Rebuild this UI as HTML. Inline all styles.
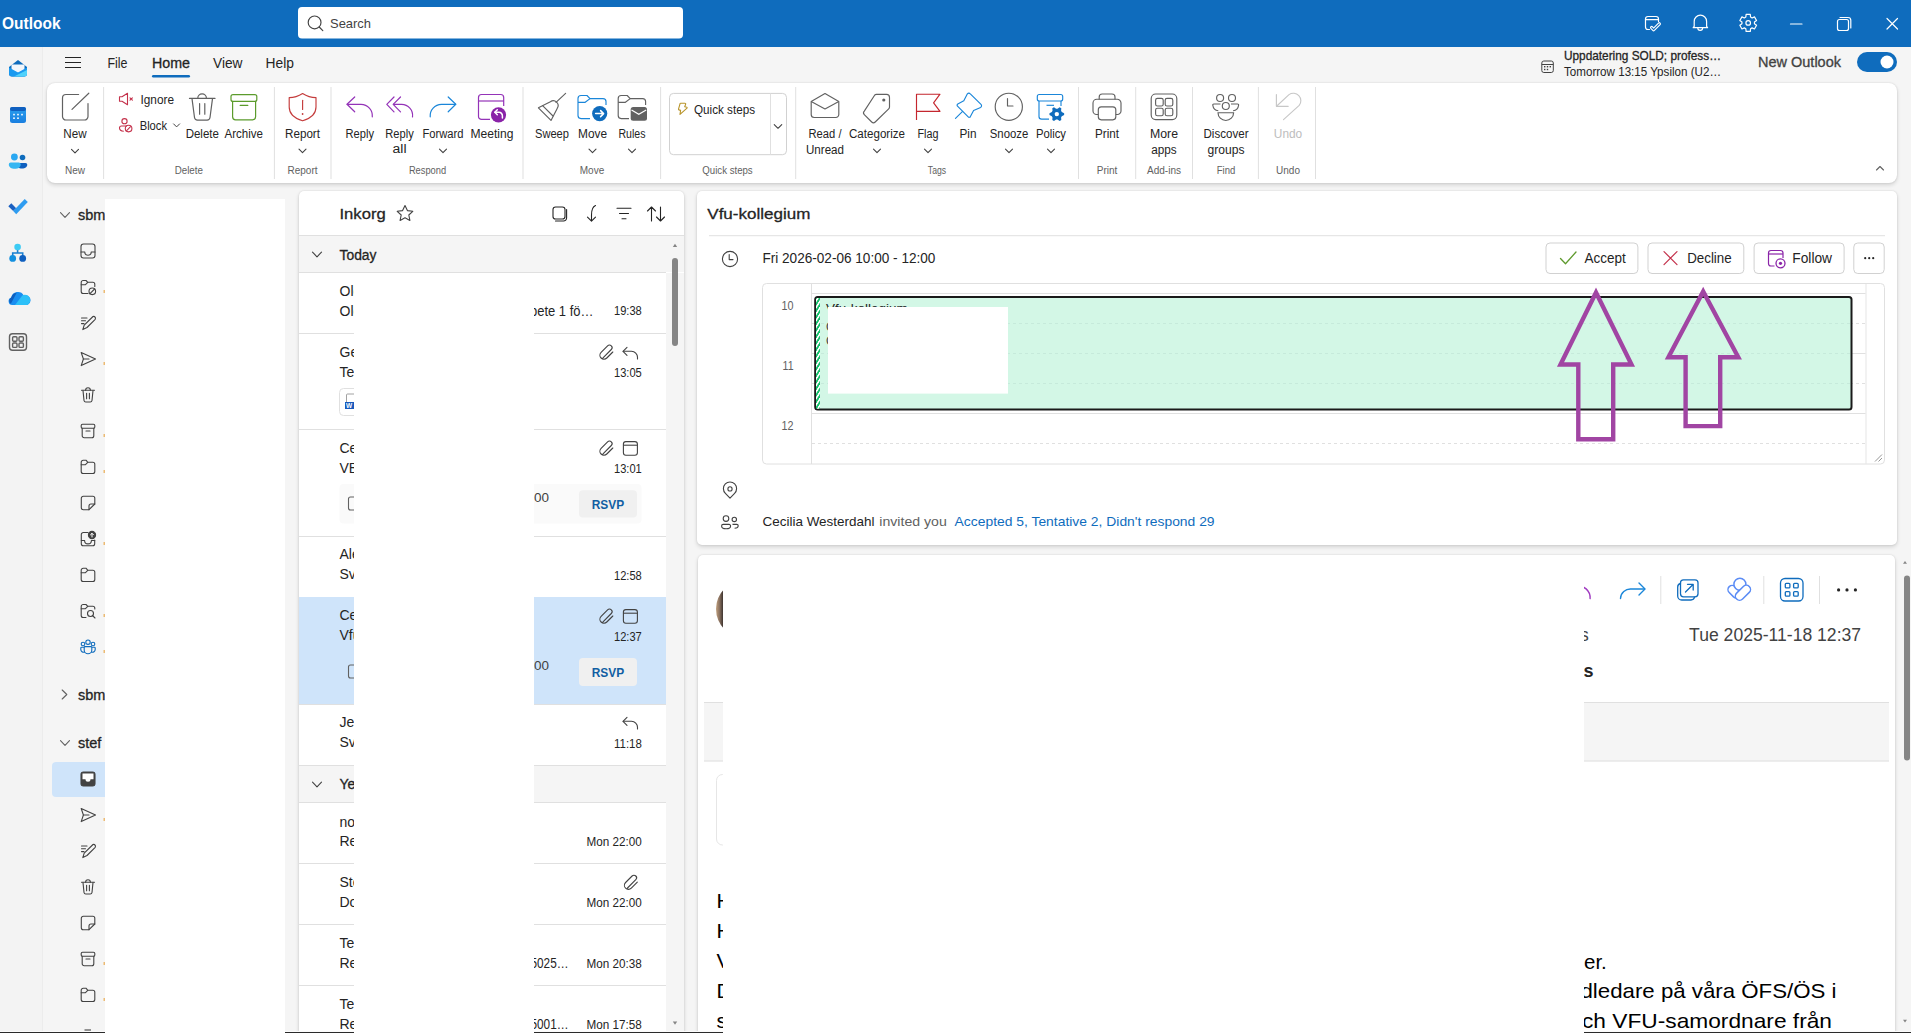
<!DOCTYPE html>
<html><head><meta charset="utf-8">
<style>
*{box-sizing:border-box;margin:0;padding:0}
html,body{width:1911px;height:1033px;overflow:hidden;background:#f5f5f5;font-family:"Liberation Sans",sans-serif;color:#242424}
.a{position:absolute}
#title{left:0;top:0;width:1911px;height:47px;background:#0f6cbd}
#rail{left:0;top:47px;width:43px;height:986px;background:#f3f3f3;border-right:1px solid #ececec}
#ribbon{left:47px;top:83px;width:1850px;height:100px;background:#fff;border-radius:8px;box-shadow:0 0 2px rgba(0,0,0,.12),0 2px 4px rgba(0,0,0,.14)}
#list{left:299px;top:191px;width:385px;height:850px;background:#fff;border-radius:5px 5px 0 0;box-shadow:0 0 2px rgba(0,0,0,.12),0 2px 4px rgba(0,0,0,.14)}
#rp1{left:697px;top:191px;width:1200px;height:354px;background:#fff;border-radius:5px;box-shadow:0 0 2px rgba(0,0,0,.12),0 2px 4px rgba(0,0,0,.14)}
#rp2{left:698px;top:555px;width:1197px;height:500px;background:#fff;border-radius:5px 5px 0 0;box-shadow:0 0 2px rgba(0,0,0,.12),0 2px 4px rgba(0,0,0,.14)}
#ov{position:absolute;left:0;top:0;width:1911px;height:1033px;overflow:hidden}
#ov text{font-family:"Liberation Sans",sans-serif}
</style></head><body>
<div id="title" class="a"></div>
<div id="rail" class="a"></div>
<div id="ribbon" class="a"></div>
<div id="list" class="a"></div>
<div id="rp1" class="a"></div>
<div id="rp2" class="a"></div>
<svg id="ov" width="1911" height="1033" viewBox="0 0 1911 1033">
<text x="2" y="29.3" font-size="16" font-weight="bold" fill="#fff" textLength="58.5" lengthAdjust="spacingAndGlyphs">Outlook</text>
<rect x="298" y="7" width="385" height="31.4" rx="4" fill="#fff"/>
<g fill="none" stroke="#424242" stroke-width="1.15"><circle cx="314.6" cy="22.4" r="6.4"/><path d="M319.2 27 L322.8 30.6" stroke-linecap="round"/></g>
<text x="330" y="28" font-size="13.5" fill="#424242" textLength="41" lengthAdjust="spacingAndGlyphs">Search</text>
<g fill="none" stroke="#fff" stroke-width="1.2" stroke-linecap="round" stroke-linejoin="round">
<path d="M1649.5 29.5 H1648 a2.5 2.5 0 0 1 -2.5 -2.5 V19 a2.5 2.5 0 0 1 2.5 -2.5 H1656 a2.5 2.5 0 0 1 2.5 2.5 V21.5"/><path d="M1645.5 19.6 H1658.5"/><path d="M1651.7 27.6 L1653.6 29.6 L1659.3 23.9" stroke-width="3.4"/><path d="M1651.7 27.6 L1653.6 29.6 L1659.3 23.9" stroke="#0f6cbd" stroke-width="1.1"/>
<path d="M1694.2 26.3 V21.4 a6.2 6.2 0 0 1 12.4 0 V26.3 l1 1.4 H1693.2 z"/><path d="M1697.8 27.9 a2.4 2.4 0 0 0 4.8 0"/>
<path d="M1745.84 17.06 L1746.10 14.46 L1750.30 14.46 L1750.56 17.06 L1752.08 17.94 L1754.46 16.86 L1756.56 20.50 L1754.44 22.02 L1754.44 23.78 L1756.56 25.30 L1754.46 28.94 L1752.08 27.86 L1750.56 28.74 L1750.30 31.34 L1746.10 31.34 L1745.84 28.74 L1744.32 27.86 L1741.94 28.94 L1739.84 25.30 L1741.96 23.78 L1741.96 22.02 L1739.84 20.50 L1741.94 16.86 L1744.32 17.94 z"/><circle cx="1748.2" cy="22.9" r="2.3"/>
<path d="M1790.5 24 H1802"/>
<rect x="1837.5" y="19.5" width="11" height="11" rx="2"/><path d="M1840 17.5 H1848 a2.8 2.8 0 0 1 2.8 2.8 V28"/>
<path d="M1887 18.5 L1897.5 29 M1897.5 18.5 L1887 29"/>
</g>
<g stroke="#242424" stroke-width="1.2"><path d="M65 57.5 H81 M65 62.5 H81 M65 67.5 H81"/></g>
<text x="107.5" y="68" font-size="14" fill="#242424" textLength="20" lengthAdjust="spacingAndGlyphs">File</text>
<text x="152" y="68" font-size="14" fill="#242424" textLength="38" lengthAdjust="spacingAndGlyphs" stroke="#242424" stroke-width="0.3">Home</text>
<rect x="152" y="75" width="38" height="2.5" rx="1.2" fill="#0f6cbd"/>
<text x="213" y="68" font-size="14" fill="#242424" textLength="29.5" lengthAdjust="spacingAndGlyphs">View</text>
<text x="265.6" y="68" font-size="14" fill="#242424" textLength="28.4" lengthAdjust="spacingAndGlyphs">Help</text>
<g fill="none" stroke="#424242" stroke-width="1"><rect x="1541.8" y="61" width="11.5" height="11.5" rx="2"/><path d="M1541.8 64.5 H1553.3"/></g><g fill="#424242"><rect x="1544" y="66" width="1.4" height="1.4"/><rect x="1546.8" y="66" width="1.4" height="1.4"/><rect x="1549.6" y="66" width="1.4" height="1.4"/><rect x="1544" y="68.8" width="1.4" height="1.4"/><rect x="1546.8" y="68.8" width="1.4" height="1.4"/></g>
<text x="1564" y="60" font-size="13" fill="#242424" textLength="157" lengthAdjust="spacingAndGlyphs" stroke="#242424" stroke-width="0.3">Uppdatering SOLD; profess…</text>
<text x="1564" y="76" font-size="13" fill="#242424" textLength="157" lengthAdjust="spacingAndGlyphs">Tomorrow 13:15 Ypsilon (U2…</text>
<text x="1758" y="67" font-size="14" fill="#424242" textLength="83" lengthAdjust="spacingAndGlyphs" stroke="#424242" stroke-width="0.3">New Outlook</text>
<rect x="1857" y="52" width="40" height="20" rx="10" fill="#0f6cbd"/><circle cx="1887" cy="62" r="6.5" fill="#fff"/>
<rect x="103.1" y="87" width="1" height="92" fill="#e0e0e0"/>
<rect x="273.9" y="87" width="1" height="92" fill="#e0e0e0"/>
<rect x="330.5" y="87" width="1" height="92" fill="#e0e0e0"/>
<rect x="522.5" y="87" width="1" height="92" fill="#e0e0e0"/>
<rect x="660.1" y="87" width="1" height="92" fill="#e0e0e0"/>
<rect x="795.2" y="87" width="1" height="92" fill="#e0e0e0"/>
<rect x="1078.0" y="87" width="1" height="92" fill="#e0e0e0"/>
<rect x="1135.2" y="87" width="1" height="92" fill="#e0e0e0"/>
<rect x="1192.0" y="87" width="1" height="92" fill="#e0e0e0"/>
<rect x="1257.9" y="87" width="1" height="92" fill="#e0e0e0"/>
<rect x="1315.0" y="87" width="1" height="92" fill="#e0e0e0"/>
<text x="75" y="174" font-size="10" fill="#616161" text-anchor="middle">New</text>
<text x="188.8" y="174" font-size="10" fill="#616161" text-anchor="middle" textLength="28.2" lengthAdjust="spacingAndGlyphs">Delete</text>
<text x="302.5" y="174" font-size="10" fill="#616161" text-anchor="middle">Report</text>
<text x="427.5" y="174" font-size="10" fill="#616161" text-anchor="middle" textLength="37.2" lengthAdjust="spacingAndGlyphs">Respond</text>
<text x="592" y="174" font-size="10" fill="#616161" text-anchor="middle">Move</text>
<text x="727.5" y="174" font-size="10" fill="#616161" text-anchor="middle" textLength="50.4" lengthAdjust="spacingAndGlyphs">Quick steps</text>
<text x="937" y="174" font-size="10" fill="#616161" text-anchor="middle" textLength="18.3" lengthAdjust="spacingAndGlyphs">Tags</text>
<text x="1107" y="174" font-size="10" fill="#616161" text-anchor="middle">Print</text>
<text x="1164" y="174" font-size="10" fill="#616161" text-anchor="middle" textLength="34" lengthAdjust="spacingAndGlyphs">Add-ins</text>
<text x="1226" y="174" font-size="10" fill="#616161" text-anchor="middle" textLength="18.5" lengthAdjust="spacingAndGlyphs">Find</text>
<text x="1288" y="174" font-size="10" fill="#616161" text-anchor="middle">Undo</text>
<g fill="none" stroke="#616161" stroke-width="1.2" stroke-linecap="round" stroke-linejoin="round">
<path d="M78.6 94.5 H66 a3.5 3.5 0 0 0 -3.5 3.5 V116.5 a3.5 3.5 0 0 0 3.5 3.5 H84.5 a3.5 3.5 0 0 0 3.5 -3.5 V103.5"/><path d="M72 109.4 L88.8 93.2"/>
</g>
<text x="75" y="137.7" font-size="12" fill="#242424" text-anchor="middle" textLength="23.3" lengthAdjust="spacingAndGlyphs">New</text>
<path d="M71.5 149.45 L75 152.95 L78.5 149.45" fill="none" stroke="#424242" stroke-width="1.1" stroke-linecap="round" stroke-linejoin="round"/>
<g fill="none" stroke="#c4314b" stroke-width="1.1" stroke-linejoin="round" stroke-linecap="round"><path d="M119.5 96.8 H122 L127.5 93.3 V104.7 L122 101.2 H119.5 z"/><path d="M130 97.8 L132.4 100.2 M132.4 97.8 L130 100.2"/></g>
<text x="140.5" y="104" font-size="12" fill="#242424" text-anchor="start" textLength="33.5" lengthAdjust="spacingAndGlyphs">Ignore</text>
<g fill="none" stroke="#c4314b" stroke-width="1.1"><circle cx="124.5" cy="121.2" r="2.6"/><path d="M127 126 H121.5 a2 2 0 0 0 -2 2 c0 1.8 1.6 3 4.3 3.2"/><circle cx="128.6" cy="128.6" r="3.3"/><path d="M126.4 130.8 L130.8 126.4"/></g>
<text x="139.7" y="129.5" font-size="12" fill="#242424" text-anchor="start" textLength="27.3" lengthAdjust="spacingAndGlyphs">Block</text>
<path d="M173.6 123.9 L176.6 126.9 L179.6 123.9" fill="none" stroke="#424242" stroke-width="1" stroke-linecap="round" stroke-linejoin="round"/>
<g fill="none" stroke="#616161" stroke-width="1.2" stroke-linecap="round" stroke-linejoin="round"><path d="M189.5 98.4 H215"/><path d="M197.8 98.2 a4.3 4.3 0 0 1 8.6 0"/><path d="M192 98.6 L194.5 117.5 a3 3 0 0 0 3 2.6 H207 a3 3 0 0 0 3 -2.6 L212.5 98.6"/><path d="M199.6 103.6 V114.2 M204.8 103.6 V114.2"/></g>
<text x="202.3" y="137.7" font-size="12" fill="#242424" text-anchor="middle" textLength="33.3" lengthAdjust="spacingAndGlyphs">Delete</text>
<g fill="none" stroke="#5b9b2c" stroke-width="1.2" stroke-linecap="round" stroke-linejoin="round"><rect x="231" y="94.6" width="25.8" height="6.8" rx="2"/><path d="M232.6 101.4 V116.8 a3 3 0 0 0 3 3 H252.6 a3 3 0 0 0 3 -3 V101.4"/><path d="M240.2 105.4 H247.8"/></g>
<text x="243.7" y="137.7" font-size="12" fill="#242424" text-anchor="middle" textLength="38.5" lengthAdjust="spacingAndGlyphs">Archive</text>
<g fill="none" stroke="#c43c3c" stroke-width="1.15" stroke-linejoin="round" stroke-linecap="round"><path d="M302.6 93.5 C298 96.5 294 97.6 289.2 97.6 V107 C289.2 113.5 294 118.2 302.6 120.8 C311.2 118.2 316 113.5 316 107 V97.6 C311.2 97.6 307.2 96.5 302.6 93.5 z"/><path d="M302.6 100.2 V109.4"/></g><circle cx="302.6" cy="114" r="0.9" fill="#c43c3c"/>
<text x="302.5" y="137.7" font-size="12" fill="#242424" text-anchor="middle" textLength="35" lengthAdjust="spacingAndGlyphs">Report</text>
<path d="M299.0 149.15 L302.5 152.65 L306.0 149.15" fill="none" stroke="#424242" stroke-width="1.1" stroke-linecap="round" stroke-linejoin="round"/>
<g fill="none" stroke="#9433b8" stroke-width="1.2" stroke-linecap="round" stroke-linejoin="round"><path d="M354.7 97 L347 104.3 L354.7 111.8"/><path d="M347.2 104.3 H361 a11.5 11.5 0 0 1 11.3 12.5"/></g>
<text x="359.8" y="137.7" font-size="12" fill="#242424" text-anchor="middle" textLength="28.4" lengthAdjust="spacingAndGlyphs">Reply</text>
<g fill="none" stroke="#9433b8" stroke-width="1.2" stroke-linecap="round" stroke-linejoin="round"><path d="M394 97 L386.8 104.3 L394 111.8"/><path d="M400.5 97 L393.2 104.3 L400.5 111.8"/><path d="M393.5 104.3 H401.5 a11 11 0 0 1 11 12.5"/></g>
<text x="399.5" y="137.7" font-size="12" fill="#242424" text-anchor="middle" textLength="28.4" lengthAdjust="spacingAndGlyphs">Reply</text>
<text x="399.5" y="153.4" font-size="12" fill="#242424" text-anchor="middle" textLength="14" lengthAdjust="spacingAndGlyphs">all</text>
<g fill="none" stroke="#1a86d9" stroke-width="1.2" stroke-linecap="round" stroke-linejoin="round"><path d="M448.2 97 L455.8 104.3 L448.2 111.8"/><path d="M455.6 104.3 H441.5 a11.5 11.5 0 0 0 -11.3 12.5"/></g>
<text x="443" y="137.7" font-size="12" fill="#242424" text-anchor="middle" textLength="41" lengthAdjust="spacingAndGlyphs">Forward</text>
<path d="M439.5 149.15 L443 152.65 L446.5 149.15" fill="none" stroke="#424242" stroke-width="1.1" stroke-linecap="round" stroke-linejoin="round"/>
<g fill="none" stroke="#9433b8" stroke-width="1.2"><path d="M490 119.4 H481.5 a3 3 0 0 1 -3 -3 V97.5 a3 3 0 0 1 3 -3 H500.7 a3 3 0 0 1 3 3 V106"/><path d="M478.5 101 H503.7"/></g>
<circle cx="498.5" cy="114.8" r="7.6" fill="#8a23a8"/><g fill="none" stroke="#fff" stroke-width="1.5" stroke-linecap="round" stroke-linejoin="round"><path d="M497.3 109.8 L494.8 112.3 L497.3 114.8"/><path d="M495 112.3 H499 a3.4 3.4 0 0 1 3.4 3.6 V118"/></g>
<text x="492" y="137.7" font-size="12" fill="#242424" text-anchor="middle" textLength="43" lengthAdjust="spacingAndGlyphs">Meeting</text>
<g fill="none" stroke="#616161" stroke-width="1.15" stroke-linejoin="round" stroke-linecap="round"><path d="M556 102.3 L565.6 93.4"/><path d="M538.4 107.8 L550.4 101.8 a4.8 4.8 0 0 1 6.8 6.6 L551 120.4 z"/><path d="M542.6 105.7 L553 116"/></g>
<text x="552" y="137.7" font-size="12" fill="#242424" text-anchor="middle" textLength="34" lengthAdjust="spacingAndGlyphs">Sweep</text>
<g fill="none" stroke="#1a86d9" stroke-width="1.15" stroke-linejoin="round"><path d="M590 118.6 H581 a3 3 0 0 1 -3 -3 V98.5 a3 3 0 0 1 3 -3 H587 L590 98.6 H603 a3 3 0 0 1 3 3 V105"/><path d="M578 102.3 H585.2 L590 98.6"/></g>
<circle cx="599.7" cy="113.6" r="7.6" fill="#0f6cbd"/><g fill="none" stroke="#fff" stroke-width="1.5" stroke-linecap="round" stroke-linejoin="round"><path d="M595.6 113.6 H603.6 M600.6 110.6 L603.6 113.6 L600.6 116.6"/></g>
<text x="592.5" y="137.7" font-size="12" fill="#242424" text-anchor="middle" textLength="29" lengthAdjust="spacingAndGlyphs">Move</text>
<path d="M589.0 149.15 L592.5 152.65 L596.0 149.15" fill="none" stroke="#424242" stroke-width="1.1" stroke-linecap="round" stroke-linejoin="round"/>
<g fill="none" stroke="#616161" stroke-width="1.15" stroke-linejoin="round"><path d="M629 118.6 H621.2 a3 3 0 0 1 -3 -3 V98.5 a3 3 0 0 1 3 -3 H627.2 L630.2 98.6 H642.6 a3 3 0 0 1 3 3 V105"/><path d="M618.2 102.3 H625.4 L630.2 98.6"/></g>
<rect x="630.7" y="107" width="16.3" height="13.7" rx="2.5" fill="#616161"/><path d="M631.5 110 L638.8 114.3 L646.2 110" fill="none" stroke="#fff" stroke-width="1.2"/>
<text x="632" y="137.7" font-size="12" fill="#242424" text-anchor="middle" textLength="27" lengthAdjust="spacingAndGlyphs">Rules</text>
<path d="M628.5 149.15 L632 152.65 L635.5 149.15" fill="none" stroke="#424242" stroke-width="1.1" stroke-linecap="round" stroke-linejoin="round"/>
<rect x="669.5" y="93.4" width="117" height="61.3" rx="4" fill="none" stroke="#d1d1d1" stroke-width="1"/><rect x="770" y="93.4" width="1" height="61.3" fill="#e0e0e0"/>
<path d="M680.8 103.2 H685 a0.7 0.7 0 0 1 0.7 0.9 L684.7 106.8 L686.8 107.3 a0.5 0.5 0 0 1 0.2 0.8 L680 114.3 L680.6 110.4 L678.9 109.9 a0.6 0.6 0 0 1 -0.4 -0.7 L680 103.8 a0.7 0.7 0 0 1 0.8 -0.6 z" fill="none" stroke="#b8942a" stroke-width="1.1" stroke-linejoin="round"/>
<text x="694" y="113.6" font-size="13" fill="#242424" text-anchor="start" textLength="61" lengthAdjust="spacingAndGlyphs">Quick steps</text>
<path d="M774.25 124.525 L778 128.275 L781.75 124.525" fill="none" stroke="#424242" stroke-width="1.1" stroke-linecap="round" stroke-linejoin="round"/>
<g fill="none" stroke="#616161" stroke-width="1.15" stroke-linejoin="round"><path d="M811.2 101.6 L825 93.5 L838.8 101.6 V114.5 a3 3 0 0 1 -3 3 H814.2 a3 3 0 0 1 -3 -3 z"/><path d="M811.2 101.6 L825 108.9 L838.8 101.6"/></g>
<text x="825" y="137.7" font-size="12" fill="#242424" text-anchor="middle" textLength="33" lengthAdjust="spacingAndGlyphs">Read /</text>
<text x="825" y="153.7" font-size="12" fill="#242424" text-anchor="middle" textLength="38" lengthAdjust="spacingAndGlyphs">Unread</text>
<g fill="none" stroke="#616161" stroke-width="1.15" stroke-linejoin="round"><path d="M876.5 94.4 H886.5 a3 3 0 0 1 3 3 V107 a2.5 2.5 0 0 1 -0.8 1.9 L875.2 122 a2.5 2.5 0 0 1 -3.5 0 L864.3 114.6 a2.5 2.5 0 0 1 0 -3.5 L874.6 95.2 a2.5 2.5 0 0 1 1.9 -0.8 z"/></g><circle cx="883.8" cy="100" r="1.6" fill="#616161"/>
<text x="877" y="137.7" font-size="12" fill="#242424" text-anchor="middle" textLength="56" lengthAdjust="spacingAndGlyphs">Categorize</text>
<path d="M873.5 149.15 L877 152.65 L880.5 149.15" fill="none" stroke="#424242" stroke-width="1.1" stroke-linecap="round" stroke-linejoin="round"/>
<g fill="none" stroke="#c4262e" stroke-width="1.15" stroke-linejoin="round"><path d="M916.5 120 V94.2 H940 L933.6 102.8 L940 111.3 H916.5"/></g>
<text x="928" y="137.7" font-size="12" fill="#242424" text-anchor="middle" textLength="21" lengthAdjust="spacingAndGlyphs">Flag</text>
<path d="M924.5 149.15 L928 152.65 L931.5 149.15" fill="none" stroke="#424242" stroke-width="1.1" stroke-linecap="round" stroke-linejoin="round"/>
<g fill="none" stroke="#1a86d9" stroke-width="1.15" stroke-linejoin="round" stroke-linecap="round"><path d="M955.5 118.4 L962.6 111.4"/><path d="M967.4 93.8 a2 2 0 0 1 2.9 0 L981 104.4 a2 2 0 0 1 -0.4 3.1 L973.6 110.5 L970.4 116.6 a1.4 1.4 0 0 1 -2.2 0.3 L957.5 106.2 a1.4 1.4 0 0 1 0.3 -2.2 L963.8 100.8 z"/></g>
<text x="968" y="137.7" font-size="12" fill="#242424" text-anchor="middle" textLength="17" lengthAdjust="spacingAndGlyphs">Pin</text>
<g fill="none" stroke="#616161" stroke-width="1.15" stroke-linecap="round" stroke-linejoin="round"><circle cx="1008.8" cy="106.8" r="13.6"/><path d="M1007.5 98.6 V106 H1013"/></g>
<text x="1009" y="137.7" font-size="12" fill="#242424" text-anchor="middle" textLength="38.5" lengthAdjust="spacingAndGlyphs">Snooze</text>
<path d="M1005.5 149.15 L1009 152.65 L1012.5 149.15" fill="none" stroke="#424242" stroke-width="1.1" stroke-linecap="round" stroke-linejoin="round"/>
<g fill="none" stroke="#1a86d9" stroke-width="1.15" stroke-linejoin="round"><rect x="1037.3" y="94.5" width="25.4" height="6.5" rx="2"/><path d="M1039 101 V116.5 a2.6 2.6 0 0 0 2.6 2.6 H1049"/><path d="M1061 101 V106"/><path d="M1046.5 105.3 H1054"/></g>
<path d="M1064.14 113.13 L1064.14 115.07 L1061.79 116.17 L1061.08 117.39 L1061.30 119.97 L1059.63 120.94 L1057.50 119.45 L1056.10 119.45 L1053.97 120.94 L1052.30 119.97 L1052.52 117.39 L1051.81 116.17 L1049.46 115.07 L1049.46 113.13 L1051.81 112.03 L1052.52 110.81 L1052.30 108.23 L1053.97 107.26 L1056.10 108.75 L1057.50 108.75 L1059.63 107.26 L1061.30 108.23 L1061.08 110.81 L1061.79 112.03 z" fill="#0f6cbd"/><circle cx="1056.8" cy="114.1" r="2.2" fill="#fff"/>
<text x="1051" y="137.7" font-size="12" fill="#242424" text-anchor="middle" textLength="30" lengthAdjust="spacingAndGlyphs">Policy</text>
<path d="M1047.5 149.15 L1051 152.65 L1054.5 149.15" fill="none" stroke="#424242" stroke-width="1.1" stroke-linecap="round" stroke-linejoin="round"/>
<g fill="none" stroke="#616161" stroke-width="1.15" stroke-linejoin="round"><path d="M1099.2 99.5 V97 a3 3 0 0 1 3 -3 H1112 a3 3 0 0 1 3 3 V99.5"/><path d="M1098.4 114.5 H1096.6 a3.6 3.6 0 0 1 -3.6 -3.6 V103 a3.8 3.8 0 0 1 3.8 -3.8 H1117.2 a3.8 3.8 0 0 1 3.8 3.8 V110.9 a3.6 3.6 0 0 1 -3.6 3.6 H1115.8"/><rect x="1098.3" y="106.8" width="17.5" height="13" rx="3"/></g>
<text x="1107" y="137.7" font-size="12" fill="#242424" text-anchor="middle" textLength="24" lengthAdjust="spacingAndGlyphs">Print</text>
<g fill="none" stroke="#616161" stroke-width="1.15"><rect x="1151.2" y="94" width="25.6" height="25.6" rx="4.5"/><rect x="1155.6" y="98.4" width="7.6" height="7.6" rx="1.8"/><rect x="1165.2" y="98.4" width="7.6" height="7.6" rx="1.8"/><rect x="1155.6" y="108.2" width="7.6" height="7.6" rx="1.8"/><rect x="1165.2" y="108.2" width="7.6" height="7.6" rx="1.8"/></g>
<text x="1164" y="137.7" font-size="12" fill="#242424" text-anchor="middle" textLength="28" lengthAdjust="spacingAndGlyphs">More</text>
<text x="1164" y="153.5" font-size="12" fill="#242424" text-anchor="middle" textLength="25.5" lengthAdjust="spacingAndGlyphs">apps</text>
<g fill="none" stroke="#616161" stroke-width="1.15"><circle cx="1220.1" cy="98" r="3.5"/><circle cx="1232" cy="98" r="3.5"/><circle cx="1225.8" cy="106" r="3.5"/><path d="M1220.5 104 H1213.8 a1 1 0 0 0 -1 1.2 a6.5 6.5 0 0 0 5.5 5.6"/><path d="M1231 104 H1237.6 a1 1 0 0 1 1 1.2 a6.5 6.5 0 0 1 -5.5 5.6"/><path d="M1218 112.7 H1233.6 a7.8 7.8 0 0 1 -15.6 0 z"/></g>
<text x="1226" y="137.7" font-size="12" fill="#242424" text-anchor="middle" textLength="45" lengthAdjust="spacingAndGlyphs">Discover</text>
<text x="1226" y="153.5" font-size="12" fill="#242424" text-anchor="middle" textLength="37" lengthAdjust="spacingAndGlyphs">groups</text>
<g fill="none" stroke="#c7c7c7" stroke-width="1.15" stroke-linecap="round" stroke-linejoin="round"><path d="M1276.4 94.5 V106.3 H1288.2"/><path d="M1276.8 106 L1289 94.6 a7.5 7.5 0 0 1 10.2 10.8 L1283.5 119.6"/></g>
<text x="1288" y="137.7" font-size="12" fill="#bdbdbd" text-anchor="middle" textLength="28.4" lengthAdjust="spacingAndGlyphs">Undo</text>
<path d="M1876.5 170 L1880 166.5 L1883.5 170" fill="none" stroke="#616161" stroke-width="1.1" stroke-linecap="round" stroke-linejoin="round"/>
<defs><linearGradient id="gm" x1="0" y1="0" x2="1" y2="1"><stop offset="0" stop-color="#0a5fbf"/><stop offset="1" stop-color="#36b6f2"/></linearGradient><linearGradient id="gc" x1="0" y1="0" x2="0" y2="1"><stop offset="0" stop-color="#2aa0ee"/><stop offset="1" stop-color="#1a7fe0"/></linearGradient></defs>
<path d="M9 67 L18 60 L27 67 V73.5 a3 3 0 0 1 -3 3 H12 a3 3 0 0 1 -3 -3 z" fill="#0f6cbd"/>
<path d="M11.5 64.5 H24.5 V70 L18 73 L11.5 70 z" fill="#f2f6fb"/>
<path d="M9 67.5 L18 72.5 L27 67.5 V73.5 a3 3 0 0 1 -3 3 H12 a3 3 0 0 1 -3 -3 z" fill="#1a9af0"/>
<path d="M14 76.5 L27 70 V73.5 a3 3 0 0 1 -3 3 z" fill="#50d2fb"/>
<rect x="10" y="107" width="16" height="16" rx="2.5" fill="url(#gc)"/><rect x="10" y="107" width="16" height="4" rx="2" fill="#0f5fbf"/>
<g fill="#fff"><rect x="13.2" y="113.8" width="1.6" height="1.6"/><rect x="17.2" y="113.8" width="1.6" height="1.6"/><rect x="21.2" y="113.8" width="1.6" height="1.6"/><rect x="13.2" y="117.4" width="1.6" height="1.6"/><rect x="17.2" y="117.4" width="1.6" height="1.6"/></g>
<circle cx="22.5" cy="157.5" r="2.8" fill="#0f6cbd"/><path d="M17.5 163 H25.5 a1.8 1.8 0 0 1 1.8 1.8 c0 2.2 -2.5 3.8 -5 3.8 c-2 0 -3.5 -0.6 -4.3 -1.6 z" fill="#0f5fbf"/>
<circle cx="14.4" cy="157" r="3.4" fill="#2aa8f2"/><path d="M10.8 162.5 H18.8 a1.9 1.9 0 0 1 1.9 1.9 c0 2.6 -2.6 4.4 -5.9 4.4 c-3.3 0 -6 -1.8 -6 -4.4 a1.9 1.9 0 0 1 1.9 -1.9 z" fill="#36b6f2"/>
<path d="M8.3 206.2 L11.3 203.3 L16.2 208.2 L13.2 211.1 z" fill="#1a5fc0"/><path d="M13.2 211.1 L24.7 199 L27.8 202 L16.2 214.3 L13.2 211.1 z" fill="#2e9cf0"/>
<path d="M17.6 247 V253 M12.7 258.4 V253 H22.7 V258.4" stroke="#1a7fd0" stroke-width="1.6" fill="none"/><circle cx="17.6" cy="247" r="3.3" fill="#3ccbf4"/><circle cx="12.7" cy="258.4" r="3.4" fill="#1490df"/><circle cx="22.7" cy="258.4" r="3.4" fill="#0f5fbf"/>
<path d="M12.2 305 a3.8 3.8 0 0 1 -1 -7.4 a6.8 6.8 0 0 1 12.6 -2.2 a4.8 4.8 0 0 1 3.3 9.6 z" fill="#1a8ef0"/><path d="M15 305 L22.5 295.2 a4.8 4.8 0 0 1 4.6 9.8 z" fill="#2cc0f8"/><path d="M10.2 303.5 a3.8 3.8 0 0 1 1 -5.9 a6.8 6.8 0 0 1 5.5 -4.8 L11 303.5 z" fill="#0f5fbf"/>
<g fill="none" stroke="#616161" stroke-width="1.4"><rect x="9.5" y="333.8" width="17" height="16.5" rx="3"/><rect x="12.6" y="336.8" width="4.4" height="4.4" rx="1"/><rect x="19" y="336.8" width="4.4" height="4.4" rx="1"/><rect x="12.6" y="343" width="4.4" height="4.4" rx="1"/><rect x="19" y="343" width="4.4" height="4.4" rx="1"/></g>
<path d="M60.5 212.7 L65 217.3 L69.5 212.7" fill="none" stroke="#616161" stroke-width="1.1" stroke-linecap="round" stroke-linejoin="round"/>
<text x="78" y="220" font-size="14.5" fill="#242424" stroke="#242424" stroke-width="0.3">sbm</text>
<g transform="translate(80,243)" fill="none" stroke="#424242" stroke-width="1.1" stroke-linejoin="round" stroke-linecap="round"><rect x="1" y="1" width="14" height="14" rx="2.5"/><path d="M1 9 H4.8 a3.2 3.2 0 0 0 6.4 0 H15"/></g>
<g transform="translate(80,279)" fill="none" stroke="#424242" stroke-width="1.1" stroke-linejoin="round" stroke-linecap="round"><path d="M8 14.5 H3.2 a2 2 0 0 1 -2 -2 V3.5 a2 2 0 0 1 2 -2 H6 L7.8 3.3 H12.8 a2 2 0 0 1 2 2 V7.5"/><path d="M1.2 5.8 H5.2 L7.8 3.3"/><circle cx="12.3" cy="12.3" r="3.3"/><path d="M10 14.6 L14.6 10"/></g>
<g transform="translate(80,315)" fill="none" stroke="#424242" stroke-width="1.1" stroke-linejoin="round" stroke-linecap="round"><path d="M1.5 3 H7 M1.5 5.8 H5.5 M1.5 8.6 H4"/><path d="M13 1.5 a1.9 1.9 0 0 1 2.2 2.8 L7 12.5 L2.8 14.6 L4.2 10.2 z"/></g>
<g transform="translate(80,351)" fill="none" stroke="#424242" stroke-width="1.1" stroke-linejoin="round" stroke-linecap="round"><path d="M1.2 1.5 L15.5 8 L1.2 14.6 L3.4 8 z"/><path d="M3.4 8 H9"/></g>
<g transform="translate(80,387)" fill="none" stroke="#424242" stroke-width="1.1" stroke-linejoin="round" stroke-linecap="round"><path d="M1.5 3.3 H14.5"/><path d="M5.6 3.2 a2.4 2.4 0 0 1 4.8 0"/><path d="M3 3.5 L4 13.5 a1.8 1.8 0 0 0 1.8 1.5 H10.2 a1.8 1.8 0 0 0 1.8 -1.5 L13 3.5"/><path d="M6.6 6.2 V11.8 M9.4 6.2 V11.8"/></g>
<g transform="translate(80,423)" fill="none" stroke="#424242" stroke-width="1.1" stroke-linejoin="round" stroke-linecap="round"><rect x="1.2" y="1.2" width="13.6" height="4" rx="1.3"/><path d="M2.2 5.2 V12.8 a2 2 0 0 0 2 2 H11.8 a2 2 0 0 0 2 -2 V5.2"/><path d="M6 8 H10"/></g>
<g transform="translate(80,459)" fill="none" stroke="#424242" stroke-width="1.1" stroke-linejoin="round" stroke-linecap="round"><path d="M1.2 3.2 a2 2 0 0 1 2 -2 H6 L7.8 3.3 H12.8 a2 2 0 0 1 2 2 V12.5 a2 2 0 0 1 -2 2 H3.2 a2 2 0 0 1 -2 -2 z"/><path d="M1.2 5.8 H5.2 L7.8 3.3"/></g>
<g transform="translate(80,495)" fill="none" stroke="#424242" stroke-width="1.1" stroke-linejoin="round" stroke-linecap="round"><path d="M14.8 9 V3.3 a2 2 0 0 0 -2 -2 H3.3 a2 2 0 0 0 -2 2 V12.7 a2 2 0 0 0 2 2 H9 z"/><path d="M9 14.7 V11 a2 2 0 0 1 2 -2 H14.8"/></g>
<g transform="translate(80,531)" fill="none" stroke="#424242" stroke-width="1.1" stroke-linejoin="round" stroke-linecap="round"><path d="M8 1.5 H3.3 a2 2 0 0 0 -2 2 V12.7 a2 2 0 0 0 2 2 H12.7 a2 2 0 0 0 2 -2 V9"/><path d="M1.3 9.5 H4.6 a3.4 3.4 0 0 0 6.8 0 H14.7"/><circle cx="12" cy="4" r="3.6" fill="#424242"/><path d="M12 6 V2.4 M10.5 3.8 L12 2.3 L13.5 3.8" stroke="#fff" stroke-width="1"/></g>
<g transform="translate(80,567)" fill="none" stroke="#424242" stroke-width="1.1" stroke-linejoin="round" stroke-linecap="round"><path d="M1.2 3.2 a2 2 0 0 1 2 -2 H6 L7.8 3.3 H12.8 a2 2 0 0 1 2 2 V12.5 a2 2 0 0 1 -2 2 H3.2 a2 2 0 0 1 -2 -2 z"/><path d="M1.2 5.8 H5.2 L7.8 3.3"/></g>
<g transform="translate(80,603)" fill="none" stroke="#424242" stroke-width="1.1" stroke-linejoin="round" stroke-linecap="round"><path d="M6 14.5 H3.2 a2 2 0 0 1 -2 -2 V3.5 a2 2 0 0 1 2 -2 H6 L7.8 3.3 H12.8 a2 2 0 0 1 2 2 V6"/><path d="M1.2 5.8 H5.2 L7.8 3.3"/><circle cx="10.5" cy="10.5" r="3"/><path d="M12.6 12.6 L15 15"/></g>
<g transform="translate(80,639)" fill="none" stroke="#0f6cbd" stroke-width="1.1" stroke-linejoin="round" stroke-linecap="round"><circle cx="8" cy="3.2" r="2.2"/><circle cx="3" cy="5" r="1.8"/><circle cx="13" cy="5" r="1.8"/><path d="M5 7.6 H11 a0.8 0.8 0 0 1 0.8 0.8 V11 a3.8 3.8 0 0 1 -7.6 0 V8.4 a0.8 0.8 0 0 1 0.8 -0.8 z"/><path d="M3.6 8.2 H1.6 a0.8 0.8 0 0 0 -0.8 0.8 V10.5 a2.8 2.8 0 0 0 3.6 2.6"/><path d="M12.4 8.2 H14.4 a0.8 0.8 0 0 1 0.8 0.8 V10.5 a2.8 2.8 0 0 1 -3.6 2.6"/></g>
<path d="M62.2 690.0 L66.8 694.5 L62.2 699.0" fill="none" stroke="#616161" stroke-width="1.1" stroke-linecap="round" stroke-linejoin="round"/>
<text x="78" y="699.5" font-size="14.5" fill="#242424" stroke="#242424" stroke-width="0.3">sbm</text>
<path d="M60.5 740.7 L65 745.3 L69.5 740.7" fill="none" stroke="#616161" stroke-width="1.1" stroke-linecap="round" stroke-linejoin="round"/>
<text x="78" y="748" font-size="14.5" fill="#242424" stroke="#242424" stroke-width="0.3">stef</text>
<rect x="52" y="762" width="60" height="35" rx="4" fill="#cfe4fa"/>
<g transform="translate(80,771)" fill="none" stroke="#424242" stroke-width="1.1" stroke-linejoin="round" stroke-linecap="round"><rect x="1" y="1" width="14" height="14" rx="2.5" fill="#424242"/><path d="M2.5 2.5 H13.5 V8.3 H10.5 a2.5 2.5 0 0 1 -5 0 H2.5 z" fill="#fff" stroke="none"/></g>
<g transform="translate(80,807)" fill="none" stroke="#424242" stroke-width="1.1" stroke-linejoin="round" stroke-linecap="round"><path d="M1.2 1.5 L15.5 8 L1.2 14.6 L3.4 8 z"/><path d="M3.4 8 H9"/></g>
<g transform="translate(80,843)" fill="none" stroke="#424242" stroke-width="1.1" stroke-linejoin="round" stroke-linecap="round"><path d="M1.5 3 H7 M1.5 5.8 H5.5 M1.5 8.6 H4"/><path d="M13 1.5 a1.9 1.9 0 0 1 2.2 2.8 L7 12.5 L2.8 14.6 L4.2 10.2 z"/></g>
<g transform="translate(80,879)" fill="none" stroke="#424242" stroke-width="1.1" stroke-linejoin="round" stroke-linecap="round"><path d="M1.5 3.3 H14.5"/><path d="M5.6 3.2 a2.4 2.4 0 0 1 4.8 0"/><path d="M3 3.5 L4 13.5 a1.8 1.8 0 0 0 1.8 1.5 H10.2 a1.8 1.8 0 0 0 1.8 -1.5 L13 3.5"/><path d="M6.6 6.2 V11.8 M9.4 6.2 V11.8"/></g>
<g transform="translate(80,915)" fill="none" stroke="#424242" stroke-width="1.1" stroke-linejoin="round" stroke-linecap="round"><path d="M14.8 9 V3.3 a2 2 0 0 0 -2 -2 H3.3 a2 2 0 0 0 -2 2 V12.7 a2 2 0 0 0 2 2 H9 z"/><path d="M9 14.7 V11 a2 2 0 0 1 2 -2 H14.8"/></g>
<g transform="translate(80,951)" fill="none" stroke="#424242" stroke-width="1.1" stroke-linejoin="round" stroke-linecap="round"><rect x="1.2" y="1.2" width="13.6" height="4" rx="1.3"/><path d="M2.2 5.2 V12.8 a2 2 0 0 0 2 2 H11.8 a2 2 0 0 0 2 -2 V5.2"/><path d="M6 8 H10"/></g>
<g transform="translate(80,987)" fill="none" stroke="#424242" stroke-width="1.1" stroke-linejoin="round" stroke-linecap="round"><path d="M1.2 3.2 a2 2 0 0 1 2 -2 H6 L7.8 3.3 H12.8 a2 2 0 0 1 2 2 V12.5 a2 2 0 0 1 -2 2 H3.2 a2 2 0 0 1 -2 -2 z"/><path d="M1.2 5.8 H5.2 L7.8 3.3"/></g>
<path d="M84.5 1030 H91" stroke="#424242" stroke-width="1.1"/>
<rect x="103.5" y="290" width="1.5" height="3" fill="#e8a33d" opacity="0.7"/>
<rect x="103.5" y="362" width="1.5" height="3" fill="#e8a33d" opacity="0.7"/>
<rect x="103.5" y="434" width="1.5" height="3" fill="#e8a33d" opacity="0.7"/>
<rect x="103.5" y="470" width="1.5" height="3" fill="#e8a33d" opacity="0.7"/>
<rect x="103.5" y="542" width="1.5" height="3" fill="#e8a33d" opacity="0.7"/>
<rect x="103.5" y="614" width="1.5" height="3" fill="#e8a33d" opacity="0.7"/>
<rect x="103.5" y="650" width="1.5" height="3" fill="#e8a33d" opacity="0.7"/>
<rect x="103.5" y="818" width="1.5" height="3" fill="#e8a33d" opacity="0.7"/>
<rect x="103.5" y="962" width="1.5" height="3" fill="#e8a33d" opacity="0.7"/>
<rect x="103.5" y="998" width="1.5" height="3" fill="#e8a33d" opacity="0.7"/>
<text x="339.5" y="219" font-size="15.5" fill="#242424" text-anchor="start" textLength="46.2" lengthAdjust="spacingAndGlyphs" stroke="#242424" stroke-width="0.3">Inkorg</text>
<path d="M405 205.5 L407.4 210.6 L412.8 211.3 L408.8 215 L409.9 220.4 L405 217.7 L400.1 220.4 L401.2 215 L397.2 211.3 L402.6 210.6 z" fill="none" stroke="#424242" stroke-width="1.1" stroke-linejoin="round"/>
<g fill="none" stroke="#242424" stroke-width="1.1" stroke-linecap="round" stroke-linejoin="round">
<rect x="553" y="207" width="12" height="12" rx="2.6"/><path d="M566.6 209.5 V218 a3 3 0 0 1 -3 3 H555.5"/>
<path d="M595.5 205.5 C592 207 591.5 211 591.5 215 V221 M587.5 217.2 L591.5 221.2 L595.5 217.2"/>
<path d="M617 208.3 H631 M619.5 213.5 H628.5 M622 218.7 H626"/>
<path d="M651.5 221 V207 M647.5 211 L651.5 207 L655.5 211 M660.5 207 V221 M656.5 217 L660.5 221 L664.5 217"/>
</g>
<rect x="299" y="235" width="385" height="1" fill="#e0e0e0"/>
<rect x="299" y="236" width="385" height="36" fill="#f5f5f5"/><rect x="299" y="272" width="367" height="1" fill="#e0e0e0"/>
<path d="M312.5 252.2 L317 256.8 L321.5 252.2" fill="none" stroke="#424242" stroke-width="1.1" stroke-linecap="round" stroke-linejoin="round"/>
<text x="339.5" y="260" font-size="14" fill="#242424" text-anchor="start" textLength="37" lengthAdjust="spacingAndGlyphs" stroke="#242424" stroke-width="0.3">Today</text>
<rect x="666" y="273" width="18" height="760" fill="#f5f5f5"/>
<path d="M672.8 247 L675 243.8 L677.2 247 z" fill="#858585"/>
<rect x="672" y="258" width="6" height="88" rx="3" fill="#858585"/>
<path d="M672.8 1021.5 L675 1024.7 L677.2 1021.5 z" fill="#858585"/>
<rect x="299" y="333" width="367" height="1" fill="#e0e0e0"/>
<rect x="299" y="429" width="367" height="1" fill="#e0e0e0"/>
<rect x="299" y="536" width="367" height="1" fill="#e0e0e0"/>
<rect x="299" y="597" width="367" height="1" fill="#e0e0e0"/>
<rect x="299" y="704" width="367" height="1" fill="#e0e0e0"/>
<rect x="299" y="765" width="367" height="1" fill="#e0e0e0"/>
<rect x="299" y="863" width="367" height="1" fill="#e0e0e0"/>
<rect x="299" y="924" width="367" height="1" fill="#e0e0e0"/>
<rect x="299" y="985" width="367" height="1" fill="#e0e0e0"/>
<rect x="299" y="1046" width="367" height="1" fill="#e0e0e0"/>
<rect x="299" y="597" width="367" height="107" fill="#cfe4fa"/>
<rect x="299" y="766" width="367" height="37" fill="#f5f5f5"/><rect x="299" y="765" width="367" height="1" fill="#e0e0e0"/><rect x="299" y="802" width="367" height="1" fill="#e0e0e0"/>
<path d="M312.5 782.2 L317 786.8 L321.5 782.2" fill="none" stroke="#424242" stroke-width="1.1" stroke-linecap="round" stroke-linejoin="round"/>
<text x="339.5" y="789.3" font-size="14" fill="#242424" text-anchor="start" stroke="#242424" stroke-width="0.3">Yesterday</text>
<text x="339.5" y="296" font-size="14" fill="#242424" text-anchor="start">Olof Bergström</text>
<text x="339.5" y="316" font-size="14" fill="#242424" text-anchor="start">Olof Bergström</text>
<text x="530" y="316" font-size="14" fill="#242424" text-anchor="start" textLength="63.4" lengthAdjust="spacingAndGlyphs">bete 1 fö…</text>
<text x="641.8" y="315.4" font-size="12" fill="#242424" text-anchor="end" textLength="27.8" lengthAdjust="spacingAndGlyphs">19:38</text>
<text x="339.5" y="357" font-size="14" fill="#242424" text-anchor="start">Gerd Lindqvist</text>
<text x="339.5" y="377" font-size="14" fill="#242424" text-anchor="start">Textutkast</text>
<path transform="translate(599.5,344.8)" d="M3.5 13 L11.8 4.7 a2.6 2.6 0 0 0 -3.7 -3.7 L1.6 7.5 a4 4 0 0 0 5.7 5.7 L13.3 7.2" fill="none" stroke="#424242" stroke-width="1.1" stroke-linecap="round"/>
<g transform="translate(622,346.5)" fill="none" stroke="#424242" stroke-width="1.1" stroke-linecap="round" stroke-linejoin="round"><path d="M5 0.8 L1 4.8 L5 8.8"/><path d="M1.2 4.8 H9.5 a6 6 0 0 1 6 6 V12.5"/></g>
<text x="641.8" y="377.2" font-size="12" fill="#242424" text-anchor="end" textLength="27.8" lengthAdjust="spacingAndGlyphs">13:05</text>
<rect x="339.5" y="388.5" width="60" height="27" rx="4" fill="#fff" stroke="#e0e0e0"/>
<rect x="346.5" y="394" width="9" height="12" rx="1" fill="#fff" stroke="#8a8a8a" stroke-width="0.8"/><rect x="345" y="402" width="9" height="7" fill="#185abd"/><text x="346" y="408.3" font-size="6.5" fill="#fff" font-weight="bold">W</text>
<text x="339.5" y="453" font-size="14" fill="#242424" text-anchor="start">Cecilia Westerdahl</text>
<text x="339.5" y="473" font-size="14" fill="#242424" text-anchor="start">VB: Inbjudan</text>
<path transform="translate(599.5,440.8)" d="M3.5 13 L11.8 4.7 a2.6 2.6 0 0 0 -3.7 -3.7 L1.6 7.5 a4 4 0 0 0 5.7 5.7 L13.3 7.2" fill="none" stroke="#424242" stroke-width="1.1" stroke-linecap="round"/>
<g transform="translate(622.8,441)" fill="none" stroke="#424242" stroke-width="1.1"><rect x="0.6" y="0.6" width="14" height="13.6" rx="2.5"/><path d="M0.6 4.2 H14.6"/></g>
<text x="641.8" y="472.7" font-size="12" fill="#242424" text-anchor="end" textLength="27.8" lengthAdjust="spacingAndGlyphs">13:01</text>
<rect x="339.5" y="484" width="302" height="39.6" rx="4" fill="#fafafa"/>
<g fill="none" stroke="#616161" stroke-width="1.1"><rect x="348.5" y="497" width="12" height="13" rx="2"/></g>
<text x="534" y="501.8" font-size="13.5" fill="#424242" text-anchor="start" textLength="15" lengthAdjust="spacingAndGlyphs">00</text>
<rect x="579" y="490.2" width="58" height="27.3" rx="4" fill="#f0f0f0"/>
<text x="608" y="508.5" font-size="12.5" fill="#115ea3" text-anchor="middle" font-weight="bold" textLength="32.5" lengthAdjust="spacingAndGlyphs">RSVP</text>
<text x="339.5" y="559" font-size="14" fill="#242424" text-anchor="start">Alexandra Nilsson</text>
<text x="339.5" y="579" font-size="14" fill="#242424" text-anchor="start">Sv: Möte</text>
<text x="641.8" y="580.2" font-size="12" fill="#242424" text-anchor="end" textLength="27.8" lengthAdjust="spacingAndGlyphs">12:58</text>
<text x="339.5" y="620" font-size="14" fill="#242424" text-anchor="start">Cecilia Westerdahl</text>
<text x="339.5" y="640" font-size="14" fill="#242424" text-anchor="start">Vfu-kollegium</text>
<path transform="translate(599.5,608.8)" d="M3.5 13 L11.8 4.7 a2.6 2.6 0 0 0 -3.7 -3.7 L1.6 7.5 a4 4 0 0 0 5.7 5.7 L13.3 7.2" fill="none" stroke="#424242" stroke-width="1.1" stroke-linecap="round"/>
<g transform="translate(622.8,609)" fill="none" stroke="#424242" stroke-width="1.1"><rect x="0.6" y="0.6" width="14" height="13.6" rx="2.5"/><path d="M0.6 4.2 H14.6"/></g>
<text x="641.8" y="640.6" font-size="12" fill="#242424" text-anchor="end" textLength="27.8" lengthAdjust="spacingAndGlyphs">12:37</text>
<g fill="none" stroke="#616161" stroke-width="1.1"><rect x="348.5" y="665" width="12" height="13" rx="2"/></g>
<text x="534" y="669.6" font-size="13.5" fill="#424242" text-anchor="start" textLength="15" lengthAdjust="spacingAndGlyphs">00</text>
<rect x="579" y="658" width="58" height="28" rx="4" fill="#f0f0f0"/>
<text x="608" y="676.5" font-size="12.5" fill="#115ea3" text-anchor="middle" font-weight="bold" textLength="32.5" lengthAdjust="spacingAndGlyphs">RSVP</text>
<text x="339.5" y="727" font-size="14" fill="#242424" text-anchor="start">Jenny Ek</text>
<text x="339.5" y="747" font-size="14" fill="#242424" text-anchor="start">Sv: Fråga</text>
<g transform="translate(622,716.5)" fill="none" stroke="#424242" stroke-width="1.1" stroke-linecap="round" stroke-linejoin="round"><path d="M5 0.8 L1 4.8 L5 8.8"/><path d="M1.2 4.8 H9.5 a6 6 0 0 1 6 6 V12.5"/></g>
<text x="641.8" y="748.3" font-size="12" fill="#242424" text-anchor="end" textLength="27.8" lengthAdjust="spacingAndGlyphs">11:18</text>
<text x="339.5" y="826.5" font-size="14" fill="#242424" text-anchor="start">noreply</text>
<text x="339.5" y="845.6" font-size="14" fill="#242424" text-anchor="start">Re: Info</text>
<text x="641.8" y="846.2" font-size="12" fill="#242424" text-anchor="end" textLength="55.3" lengthAdjust="spacingAndGlyphs">Mon 22:00</text>
<text x="339.5" y="887" font-size="14" fill="#242424" text-anchor="start">Stefan</text>
<text x="339.5" y="906.9" font-size="14" fill="#242424" text-anchor="start">Dokument</text>
<path transform="translate(624,875)" d="M3.5 13 L11.8 4.7 a2.6 2.6 0 0 0 -3.7 -3.7 L1.6 7.5 a4 4 0 0 0 5.7 5.7 L13.3 7.2" fill="none" stroke="#424242" stroke-width="1.1" stroke-linecap="round"/>
<text x="641.8" y="907.1" font-size="12" fill="#242424" text-anchor="end" textLength="55.3" lengthAdjust="spacingAndGlyphs">Mon 22:00</text>
<text x="339.5" y="947.8" font-size="14" fill="#242424" text-anchor="start">Teams</text>
<text x="339.5" y="968" font-size="14" fill="#242424" text-anchor="start">Re: Ärende</text>
<text x="530.5" y="968" font-size="14" fill="#242424" text-anchor="start" textLength="38" lengthAdjust="spacingAndGlyphs">5025…</text>
<text x="641.8" y="968" font-size="12" fill="#242424" text-anchor="end" textLength="55.3" lengthAdjust="spacingAndGlyphs">Mon 20:38</text>
<text x="339.5" y="1009" font-size="14" fill="#242424" text-anchor="start">Teams</text>
<text x="339.5" y="1028.6" font-size="14" fill="#242424" text-anchor="start">Re: Ärende</text>
<text x="530.5" y="1028.9" font-size="14" fill="#242424" text-anchor="start" textLength="38" lengthAdjust="spacingAndGlyphs">5001…</text>
<text x="641.8" y="1028.9" font-size="12" fill="#242424" text-anchor="end" textLength="55.3" lengthAdjust="spacingAndGlyphs">Mon 17:58</text>
<text x="707.3" y="218.6" font-size="15.5" fill="#242424" text-anchor="start" textLength="103" lengthAdjust="spacingAndGlyphs" stroke="#242424" stroke-width="0.3">Vfu-kollegium</text>
<rect x="709" y="235.2" width="1176" height="1" fill="#e0e0e0"/>
<g fill="none" stroke="#424242" stroke-width="1.1" stroke-linecap="round" stroke-linejoin="round"><circle cx="730" cy="259" r="7.6"/><path d="M729.2 254.6 V259.6 H733"/></g>
<text x="762.4" y="262.7" font-size="14" fill="#242424" text-anchor="start" textLength="173" lengthAdjust="spacingAndGlyphs">Fri 2026-02-06 10:00 - 12:00</text>
<rect x="1546.0" y="243" width="91.90000000000009" height="30.5" rx="4" fill="#fff" stroke="#d1d1d1"/>
<rect x="1648.0" y="243" width="95.79999999999995" height="30.5" rx="4" fill="#fff" stroke="#d1d1d1"/>
<rect x="1754.1" y="243" width="90.0" height="30.5" rx="4" fill="#fff" stroke="#d1d1d1"/>
<rect x="1853.8" y="243" width="30.40000000000009" height="30.5" rx="4" fill="#fff" stroke="#d1d1d1"/>
<path d="M1560.5 258.5 L1565.5 263.8 L1576 252" fill="none" stroke="#5f9a2e" stroke-width="1.3" stroke-linecap="round" stroke-linejoin="round"/>
<text x="1584.6" y="263.3" font-size="14" fill="#242424" text-anchor="start" textLength="41.2" lengthAdjust="spacingAndGlyphs">Accept</text>
<path d="M1664 251.6 L1677 264.6 M1677 251.6 L1664 264.6" fill="none" stroke="#c4314b" stroke-width="1.2" stroke-linecap="round"/>
<text x="1687.2" y="263.3" font-size="14" fill="#242424" text-anchor="start" textLength="44.5" lengthAdjust="spacingAndGlyphs">Decline</text>
<g fill="none" stroke="#8a23a8" stroke-width="1.2"><path d="M1774.5 266 H1771 a2.5 2.5 0 0 1 -2.5 -2.5 V253 a2.5 2.5 0 0 1 2.5 -2.5 H1780.5 a2.5 2.5 0 0 1 2.5 2.5 V258"/><path d="M1768.5 254 H1783"/></g><circle cx="1780.5" cy="263.3" r="4.5" fill="#fff" stroke="#8a23a8" stroke-width="1.3"/><circle cx="1780.5" cy="263.3" r="1.6" fill="#8a23a8"/>
<text x="1792.3" y="263.3" font-size="14" fill="#242424" text-anchor="start" textLength="39.7" lengthAdjust="spacingAndGlyphs">Follow</text>
<g fill="#242424"><circle cx="1865.2" cy="258.2" r="1.1"/><circle cx="1869.2" cy="258.2" r="1.1"/><circle cx="1873.2" cy="258.2" r="1.1"/></g>
<rect x="762.5" y="283.5" width="1122" height="180.5" rx="4" fill="#fff" stroke="#e0e0e0"/>
<rect x="811" y="284" width="1" height="180" fill="#e0e0e0"/><rect x="1865.5" y="284" width="1" height="180" fill="#e6e6e6"/>
<rect x="811.5" y="293" width="1054" height="1" fill="#e0e0e0"/>
<rect x="811.5" y="353" width="1054" height="1" fill="#e0e0e0"/>
<rect x="811.5" y="413" width="1054" height="1" fill="#e0e0e0"/>
<path d="M812 323.5 H1865" stroke="#e0e0e0" stroke-width="1" stroke-dasharray="3 3"/>
<path d="M812 383.5 H1865" stroke="#e0e0e0" stroke-width="1" stroke-dasharray="3 3"/>
<path d="M812 443.5 H1865" stroke="#e0e0e0" stroke-width="1" stroke-dasharray="3 3"/>
<text x="793.6" y="309.8" font-size="13" fill="#616161" text-anchor="end" textLength="12" lengthAdjust="spacingAndGlyphs">10</text>
<text x="793.6" y="369.7" font-size="13" fill="#616161" text-anchor="end" textLength="11" lengthAdjust="spacingAndGlyphs">11</text>
<text x="793.6" y="429.8" font-size="13" fill="#616161" text-anchor="end" textLength="12" lengthAdjust="spacingAndGlyphs">12</text>
<path d="M1875 461.5 L1882 454.5 M1878.5 461.5 L1882 458" stroke="#8a8a8a" stroke-width="0.9"/>
<defs><pattern id="hatch" patternUnits="userSpaceOnUse" width="4" height="6.5" patternTransform="skewY(-58)"><rect width="4" height="6.5" fill="#12c06a"/><rect y="0" width="4" height="3" fill="#fff"/></pattern></defs>
<rect x="815.2" y="297.1" width="1036.3" height="112.4" rx="2.5" fill="#d3f7e6" stroke="#1a1a1a" stroke-width="2"/>
<path d="M821 323.5 H1850" stroke="#c6eadb" stroke-width="1" stroke-dasharray="3 3"/>
<path d="M821 353.5 H1850" stroke="#c6eadb" stroke-width="1" stroke-dasharray="3 3"/>
<path d="M821 383.5 H1850" stroke="#c6eadb" stroke-width="1" stroke-dasharray="3 3"/>
<rect x="816" y="298" width="4" height="110.6" fill="url(#hatch)"/>
<text x="826" y="313.3" font-size="13.5" fill="#242424" text-anchor="start">Vfu-kollegium</text>
<text x="826" y="330.5" font-size="12" fill="#424242" text-anchor="start">Cecilia</text>
<text x="826" y="345" font-size="12" fill="#424242" text-anchor="start">Cecilia</text>
<rect x="828" y="307" width="180" height="86.6" fill="#fff"/>
<g fill="none" stroke="#424242" stroke-width="1.1" stroke-linejoin="round"><path d="M730 498.2 L725.4 493.3 a6.6 6.6 0 1 1 9.2 0 z"/><circle cx="730" cy="488.9" r="2.1"/></g>
<g fill="none" stroke="#424242" stroke-width="1.1"><circle cx="726" cy="518.6" r="2.8"/><path d="M721.6 526 a1.6 1.6 0 0 1 1.6 -1.6 H729 a1.6 1.6 0 0 1 1.6 1.6 c0 1.8 -1.8 2.8 -4.5 2.8 s-4.5 -1 -4.5 -2.8 z"/><circle cx="734.3" cy="519.4" r="2.2"/><path d="M732.5 524.4 H736.8 a1.4 1.4 0 0 1 1.4 1.4 c0 1.6 -1.4 2.5 -3.6 2.5"/></g>
<text x="762.5" y="526" font-size="13.5" fill="#242424" text-anchor="start" textLength="112" lengthAdjust="spacingAndGlyphs">Cecilia Westerdahl</text>
<text x="879.3" y="526" font-size="13.5" fill="#616161" text-anchor="start" textLength="67.5" lengthAdjust="spacingAndGlyphs">invited you</text>
<text x="954.6" y="526" font-size="13.5" fill="#0f6cbd" text-anchor="start" textLength="260" lengthAdjust="spacingAndGlyphs">Accepted 5, Tentative 2, Didn't respond 29</text>
<g fill="none" stroke="#a145a3" stroke-width="4.4" stroke-linejoin="miter" stroke-miterlimit="10"><path d="M1596 292.5 L1631.5 364.5 H1613.2 V439.3 H1578.3 V364.5 H1560.5 z"/><path d="M1703.2 291.5 L1738.3 357.3 H1720.2 V426.1 H1685.6 V357.3 H1668.4 z"/></g>
<defs><linearGradient id="av" x1="716" y1="0" x2="723" y2="0" gradientUnits="userSpaceOnUse"><stop offset="0" stop-color="#c2a07e"/><stop offset="0.5" stop-color="#8a7260"/><stop offset="1" stop-color="#3e3430"/></linearGradient></defs>
<circle cx="744.7" cy="609" r="28.7" fill="url(#av)"/>
<rect x="704" y="702" width="1185" height="59.5" fill="#f5f5f5"/><rect x="704" y="702" width="1185" height="1" fill="#e0e0e0"/><rect x="704" y="760.5" width="1185" height="1" fill="#e0e0e0"/>
<rect x="716.5" y="774.5" width="300" height="70.5" rx="6" fill="#fff" stroke="#e6e6e6"/>
<path d="M1576 586 a12 12 0 0 1 14.1 12.6" fill="none" stroke="#a03bc1" stroke-width="1.4" stroke-linecap="round"/>
<g fill="none" stroke="#1a86d9" stroke-width="1.4" stroke-linecap="round" stroke-linejoin="round"><path d="M1639 583 L1645 589 L1639 595"/><path d="M1644.5 589 H1631 a10 10 0 0 0 -10.5 9.5"/></g>
<rect x="1660.3" y="576" width="1" height="28" fill="#e0e0e0"/><rect x="1763.3" y="576" width="1" height="28" fill="#e0e0e0"/><rect x="1819" y="576" width="1" height="28" fill="#e0e0e0"/>
<g fill="none" stroke="#0f6cbd" stroke-width="1.3" stroke-linejoin="round" stroke-linecap="round"><rect x="1680.5" y="579.8" width="17.5" height="17" rx="3"/><path d="M1680.5 583.5 a3.6 3.6 0 0 0 -2.8 3.5 V596 a4 4 0 0 0 4 4 H1691 a3.6 3.6 0 0 0 3.5 -2.8"/><path d="M1685.5 592 L1693 584.5 M1687.5 584.3 H1693.2 V590"/></g>
<g transform="translate(1722,572)" stroke-linecap="round"><path d="M10.2 17.6 L14.5 21.9" stroke="#5b8cf5" stroke-width="9.9"/><path d="M10.2 17.6 L14.5 21.9" stroke="#fff" stroke-width="6.9"/><circle cx="17.9" cy="12.2" r="6" fill="#fff" stroke="#5b8cf5" stroke-width="1.5"/><path d="M24.3 17.4 L17.6 24.1" stroke="#5b8cf5" stroke-width="9.9"/><path d="M24.3 17.4 L17.6 24.1" stroke="#fff" stroke-width="6.9"/></g>
<g fill="none" stroke="#0f6cbd" stroke-width="1.3"><rect x="1780.5" y="578.5" width="22.5" height="22.5" rx="4.5"/><rect x="1785.3" y="583.3" width="4.6" height="4.6" rx="1"/><rect x="1793.6" y="583.3" width="4.6" height="4.6" rx="1"/><rect x="1785.3" y="591.6" width="4.6" height="4.6" rx="1"/><rect x="1793.6" y="591.6" width="4.6" height="4.6" rx="1"/></g>
<g fill="#242424"><circle cx="1838.6" cy="589.9" r="1.6"/><circle cx="1847" cy="589.9" r="1.6"/><circle cx="1855.4" cy="589.9" r="1.6"/></g>
<text x="1861.1" y="641" font-size="17.5" fill="#424242" text-anchor="end" textLength="172" lengthAdjust="spacingAndGlyphs">Tue 2025-11-18 12:37</text>
<text x="1580" y="641" font-size="17.5" fill="#424242" text-anchor="start">s</text>
<text x="1576.5" y="677.4" font-size="18" fill="#242424" text-anchor="start" font-weight="bold">rs</text>
<text x="716.5" y="908" font-size="21" fill="#000">H</text>
<text x="716.5" y="938" font-size="21" fill="#000">H</text>
<text x="716.5" y="968" font-size="21" fill="#000">V</text>
<text x="716.5" y="998" font-size="21" fill="#000">D</text>
<text x="716.5" y="1028" font-size="21" fill="#000">s</text>
<text x="1584" y="968.6" font-size="21" fill="#000" textLength="22.8" lengthAdjust="spacingAndGlyphs">er.</text>
<text x="1836.5" y="998.3" font-size="21" fill="#000" text-anchor="end" textLength="256" lengthAdjust="spacingAndGlyphs">dledare på våra ÖFS/ÖS i</text>
<text x="1832" y="1028.3" font-size="21" fill="#000" text-anchor="end" textLength="250" lengthAdjust="spacingAndGlyphs">ch VFU-samordnare från</text>
<rect x="1899" y="555" width="12" height="478" fill="#f5f5f5"/>
<path d="M1905 561 L1907 563.8 L1903 563.8 z" fill="#858585"/><rect x="1904" y="575.5" width="6" height="185" rx="3" fill="#858585"/><path d="M1905 1022.5 L1907 1019.7 L1903 1019.7 z" fill="#858585"/>
<rect x="0" y="1031" width="1911" height="1" fill="#fcfcfc"/><rect x="0" y="1032" width="1911" height="1" fill="#2b2b2b"/>
<rect x="105" y="199" width="180" height="834" fill="#fff"/>
<rect x="354" y="273" width="180" height="760" fill="#fff"/>
<rect x="723" y="555" width="861" height="478" fill="#fff"/>
</svg>
</body></html>
